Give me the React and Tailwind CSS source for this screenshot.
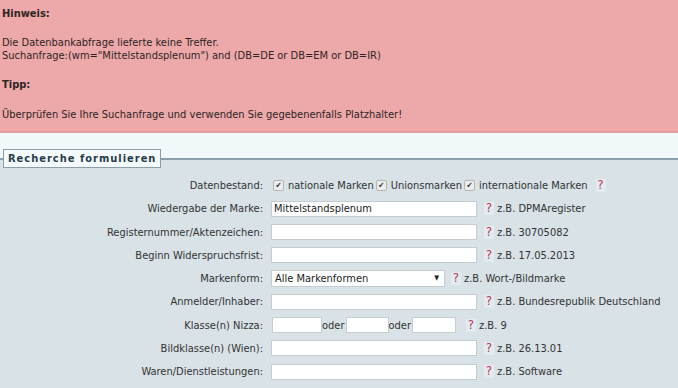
const rows = [
  { label: 'Wiedergabe der Marke:', value: 'Mittelstandsplenum', hint: 'z.B. DPMAregister' },
  { label: 'Registernummer/Aktenzeichen:', value: '', hint: 'z.B. 30705082' },
  { label: 'Beginn Widerspruchsfrist:', value: '', hint: 'z.B. 17.05.2013' },
]

const rowsAfter = [
  { label: 'Bildklasse(n) (Wien):', hint: 'z.B. 26.13.01' },
  { label: 'Waren/Dienstleistungen:', hint: 'z.B. Software' },
]

function Help() {
  return (
    <span className="inline-flex h-[13px] w-[10px] items-start justify-center bg-[#e2ebef] font-['DejaVu_Sans',sans-serif] text-[12px] leading-[12px] text-[#c4365a]">
      ?
    </span>
  )
}

function Check() {
  return (
    <span className="mx-[2px] inline-flex h-[11px] w-[11px] items-center justify-center rounded-[2px] border border-[#b5b5b5] bg-[#ececec] text-[8px] leading-none text-[#333]">
      ✔
    </span>
  )
}

function TextField({ value = '', className = 'w-[206px]' }) {
  return (
    <span className={`inline-flex h-[16px] items-center border border-[#c6cdd1] bg-white px-[2px] text-[#222] ${className}`}>
      {value}
    </span>
  )
}

function Label({ children }) {
  return <div className="flex items-center justify-end text-[#333]">{children}</div>
}

function Hint({ children, gap = 'ml-[7px]' }) {
  return (
    <span className={`${gap} inline-flex items-center gap-[3px]`}>
      <Help />
      <span>{children}</span>
    </span>
  )
}

export default function App() {
  return (
    <div className="h-[388px] w-[678px] overflow-hidden bg-[#f1f8fa] font-['DejaVu_Sans_Condensed','DejaVu_Sans',sans-serif] text-[11px] leading-[13px] text-[#333]">
      <div className="h-[133px] border-b-2 border-[#e39c9c] bg-[#eda9a9] px-[2px] pt-[7px] text-[#2e2424]">
        <p className="font-bold">Hinweis:</p>
        <p className="mt-[16px]">Die Datenbankabfrage lieferte keine Treffer.</p>
        <p>Suchanfrage:(wm="Mittelstandsplenum") and (DB=DE or DB=EM or DB=IR)</p>
        <p className="mt-[16px] font-bold">Tipp:</p>
        <p className="mt-[17px]">Überprüfen Sie Ihre Suchanfrage und verwenden Sie gegebenenfalls Platzhalter!</p>
      </div>

      <fieldset className="mt-[16px] h-[300px] border-t-2 border-[#8b9fa9] bg-[#d8e2e7]">
        <legend className="ml-[3px] border border-[#8b9fa9] bg-[#f4f9fb] px-[4px] py-[2px] text-[11px] font-bold tracking-[1px] text-[#263c48]">
          Recherche formulieren
        </legend>

        <div className="grid grid-cols-[263px_1fr] auto-rows-[23.25px] gap-x-[8px] pt-[6px]">
          <Label>Datenbestand:</Label>
          <div className="flex items-center">
            <Check />
            <span className="ml-[2px]">nationale Marken</span>
            <Check />
            <span className="ml-[2px]">Unionsmarken</span>
            <Check />
            <span className="ml-[2px]">internationale Marken</span>
            <span className="ml-[8px]">
              <Help />
            </span>
          </div>

          {rows.map((row) => (
            <div key={row.label} className="contents">
              <Label>{row.label}</Label>
              <div className="flex items-center">
                <TextField value={row.value} />
                <Hint>{row.hint}</Hint>
              </div>
            </div>
          ))}

          <Label>Markenform:</Label>
          <div className="flex items-center">
            <span className="inline-flex h-[17px] w-[174px] items-center justify-between border border-[#c6cdd1] bg-white pl-[3px] pr-[5px] text-[#222]">
              Alle Markenformen
              <span className="text-[7px]">▼</span>
            </span>
            <Hint gap="ml-[6px]">z.B. Wort-/Bildmarke</Hint>
          </div>

          <Label>Anmelder/Inhaber:</Label>
          <div className="flex items-center">
            <TextField />
            <Hint>z.B. Bundesrepublik Deutschland</Hint>
          </div>

          <Label>Klasse(n) Nizza:</Label>
          <div className="flex items-center">
            <TextField className="ml-[1px] w-[50px]" />
            <span>oder</span>
            <TextField className="ml-[1px] w-[43px]" />
            <span>oder</span>
            <TextField className="ml-[1px] w-[44px]" />
            <Hint gap="ml-[10px]">z.B. 9</Hint>
          </div>

          {rowsAfter.map((row) => (
            <div key={row.label} className="contents">
              <Label>{row.label}</Label>
              <div className="flex items-center">
                <TextField />
                <Hint>{row.hint}</Hint>
              </div>
            </div>
          ))}
        </div>
      </fieldset>
    </div>
  )
}
